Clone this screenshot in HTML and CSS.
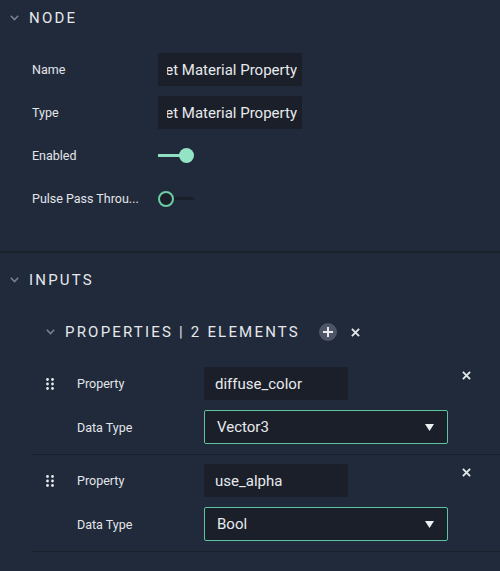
FILE: index.html
```html
<!DOCTYPE html>
<html>
<head>
<meta charset="utf-8">
<link rel="stylesheet" href="styles.css">
</head>
<body>
<div class="panel">
  <section class="section node">
    <div class="sec-head">
      <svg class="chev" viewBox="0 0 9 6"><path d="M0.8 0.8 L4.5 4.6 L8.2 0.8" fill="none" stroke="#7a8291" stroke-width="1.5"/></svg>
      <span class="sec-title">NODE</span>
    </div>
    <div class="fields">
      <div class="label">Name</div>
      <div class="textbox scrolled"><div class="clip"><span>Set Material Property</span></div></div>
      <div class="label">Type</div>
      <div class="textbox scrolled"><div class="clip"><span>Set Material Property</span></div></div>
      <div class="label">Enabled</div>
      <div class="toggle on"><span class="track"></span><span class="knob"></span></div>
      <div class="label">Pulse Pass Throu...</div>
      <div class="toggle off"><span class="knob"></span><span class="track"></span></div>
    </div>
  </section>
  <section class="section inputs">
    <div class="sec-head">
      <svg class="chev" viewBox="0 0 9 6"><path d="M0.8 0.8 L4.5 4.6 L8.2 0.8" fill="none" stroke="#7a8291" stroke-width="1.5"/></svg>
      <span class="sec-title">INPUTS</span>
    </div>
    <div class="sub-head">
      <svg class="chev" viewBox="0 0 9 6"><path d="M0.8 0.8 L4.5 4.6 L8.2 0.8" fill="none" stroke="#7a8291" stroke-width="1.5"/></svg>
      <span class="sec-title">PROPERTIES | 2 ELEMENTS</span>
      <span class="add-btn"><svg viewBox="0 0 18 18"><path d="M9 4 V14 M4 9 H14" stroke="#e8eaef" stroke-width="2"/></svg></span>
      <svg class="clear-btn" viewBox="0 0 8 8"><path d="M0.8 0.8 L7.2 7.2 M7.2 0.8 L0.8 7.2" stroke="#e3e6eb" stroke-width="1.7"/></svg>
    </div>
    <div class="items">
      <div class="item">
        <svg class="handle" viewBox="0 0 8 12"><g fill="#e6e8ed"><circle cx="1.5" cy="1.5" r="1.4"/><circle cx="6.5" cy="1.5" r="1.4"/><circle cx="1.5" cy="6" r="1.4"/><circle cx="6.5" cy="6" r="1.4"/><circle cx="1.5" cy="10.5" r="1.4"/><circle cx="6.5" cy="10.5" r="1.4"/></g></svg>
        <div class="label">Property</div>
        <div class="textbox short">diffuse_color</div>
        <svg class="close" viewBox="0 0 8 8"><path d="M0.8 0.8 L7.2 7.2 M7.2 0.8 L0.8 7.2" stroke="#e3e6eb" stroke-width="1.7"/></svg>
        <div class="label row2">Data Type</div>
        <div class="select row2v"><span>Vector3</span><svg class="caret" viewBox="0 0 9 7"><path d="M0 0 H9 L4.5 7 Z" fill="#eceef2"/></svg></div>
      </div>
      <div class="item">
        <svg class="handle" viewBox="0 0 8 12"><g fill="#e6e8ed"><circle cx="1.5" cy="1.5" r="1.4"/><circle cx="6.5" cy="1.5" r="1.4"/><circle cx="1.5" cy="6" r="1.4"/><circle cx="6.5" cy="6" r="1.4"/><circle cx="1.5" cy="10.5" r="1.4"/><circle cx="6.5" cy="10.5" r="1.4"/></g></svg>
        <div class="label">Property</div>
        <div class="textbox short">use_alpha</div>
        <svg class="close" viewBox="0 0 8 8"><path d="M0.8 0.8 L7.2 7.2 M7.2 0.8 L0.8 7.2" stroke="#e3e6eb" stroke-width="1.7"/></svg>
        <div class="label row2">Data Type</div>
        <div class="select row2v"><span>Bool</span><svg class="caret" viewBox="0 0 9 7"><path d="M0 0 H9 L4.5 7 Z" fill="#eceef2"/></svg></div>
      </div>
    </div>
  </section>
</div>
</body>
</html>
```

FILE: styles.css
```css
html, body {
  margin: 0;
  padding: 0;
}
body {
  background: #212a3a;
  font-family: Roboto, "Noto Sans", "Liberation Sans", sans-serif;
  color: #dfe2e8;
  width: 500px;
  height: 571px;
  overflow: hidden;
}
.panel {
  display: flex;
  flex-direction: column;
}
.sec-head {
  display: flex;
  align-items: center;
  height: 36px;
  padding-left: 10px;
}
.chev {
  width: 9px;
  height: 6px;
  margin-right: 10px;
  flex: none;
}
.sec-title {
  font-size: 15px;
  letter-spacing: 2.2px;
  color: #e6e8ed;
  white-space: nowrap;
}
.node {
  border-bottom: 2px solid #1b212c;
}
.fields {
  display: grid;
  grid-template-columns: 126px 144px;
  grid-auto-rows: 33px;
  row-gap: 10px;
  align-items: center;
  padding: 17px 0 36px 32px;
}
.label {
  font-size: 12.5px;
  color: #e2e5ea;
  white-space: nowrap;
}
.textbox {
  height: 33px;
  background: #1a1f29;
  color: #e8eaee;
  font-size: 15px;
  display: flex;
  align-items: center;
  box-sizing: border-box;
  padding: 0 11px;
  white-space: nowrap;
  overflow: hidden;
}
.textbox.scrolled {
  padding: 0 5px 0 9px;
}
.clip {
  flex: 1;
  min-width: 0;
  display: flex;
  justify-content: flex-end;
  overflow: hidden;
}
.clip span {
  flex: none;
}
.toggle {
  display: flex;
  align-items: center;
  width: 36px;
  height: 16px;
}
.toggle.on .track {
  width: 22px;
  height: 3px;
  background: #8de0bf;
}
.toggle.on .knob {
  width: 15px;
  height: 15px;
  border-radius: 50%;
  background: #94e3c4;
  margin-left: -1px;
}
.toggle.off .knob {
  width: 16px;
  height: 16px;
  box-sizing: border-box;
  border-radius: 50%;
  border: 2.5px solid #6ccca5;
  background: #1a1f29;
}
.toggle.off .track {
  width: 20px;
  height: 3px;
  background: #1a1f29;
}
.inputs {
  padding-top: 9px;
}
.sub-head {
  display: flex;
  align-items: center;
  height: 36px;
  margin-top: 16px;
  padding-left: 46px;
}
.add-btn {
  width: 18px;
  height: 18px;
  border-radius: 50%;
  background: #4d5566;
  margin-left: 19px;
  display: flex;
}
.add-btn svg {
  width: 18px;
  height: 18px;
}
.clear-btn {
  width: 9px;
  height: 9px;
  margin-left: 14px;
}
.items {
  margin-top: 8px;
}
.item {
  margin-left: 32px;
  padding: 9px 0 10px;
  border-bottom: 1px solid #1b212c;
  display: grid;
  grid-template-columns: 45px 127px 244px 1fr;
  grid-template-rows: 33px 34px;
  row-gap: 10px;
  align-items: center;
}
.handle {
  width: 8px;
  height: 12px;
  margin-left: 14px;
}
.textbox.short {
  width: 144px;
}
.close {
  width: 9px;
  height: 9px;
  align-self: start;
  margin-top: 4px;
  margin-left: 14px;
}
.row2 {
  grid-column: 2;
  grid-row: 2;
}
.row2v {
  grid-column: 3;
  grid-row: 2;
}
.select {
  height: 34px;
  box-sizing: border-box;
  border: 1px solid #5ec4a0;
  border-radius: 2px;
  background: #1a1f29;
  display: flex;
  align-items: center;
  justify-content: space-between;
  padding: 0 13px 0 12px;
  font-size: 15px;
  color: #e8eaee;
}
.caret {
  width: 9px;
  height: 7px;
}
```
